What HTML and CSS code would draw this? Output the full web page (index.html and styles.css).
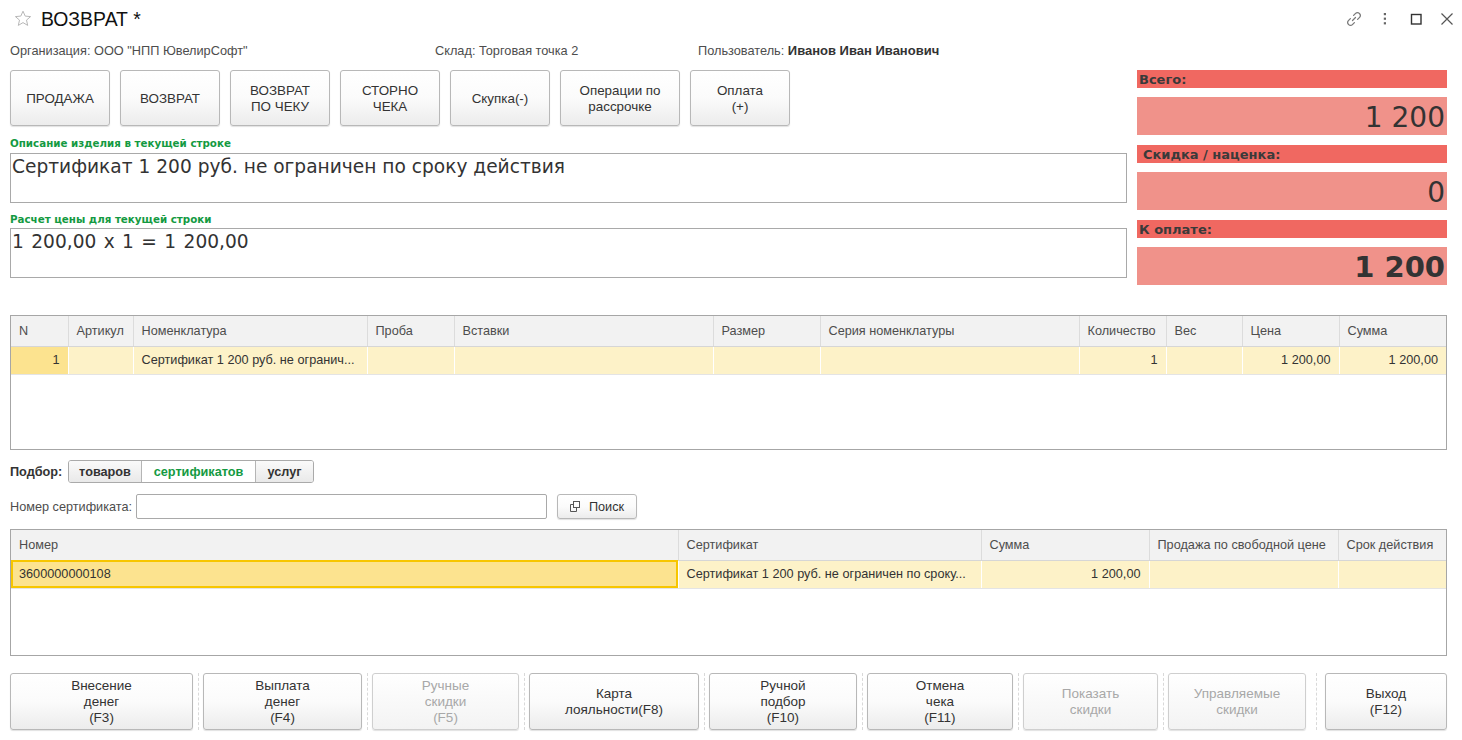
FILE: index.html
```html
<!DOCTYPE html>
<html lang="ru">
<head>
<meta charset="utf-8">
<title>ВОЗВРАТ</title>
<link rel="stylesheet" href="styles.css">
</head>
<body>
<div class="page">
  <header class="titlebar">
    <svg class="star" width="18" height="17" viewBox="0 0 18 17"><path d="M9 1.2 L11.2 6.1 L16.6 6.6 L12.5 10.1 L13.7 15.4 L9 12.6 L4.3 15.4 L5.5 10.1 L1.4 6.6 L6.8 6.1 Z" fill="none" stroke="#b8b8b8" stroke-width="1"/></svg>
    <h1 class="title">ВОЗВРАТ *</h1>
    <div class="win-icons">
      <svg width="18" height="18" viewBox="0 0 18 18"><g fill="none" stroke="#7a7a7a" stroke-width="1.3" stroke-linecap="round"><path d="M7.5 10.5 L10.5 7.5"/><path d="M8.6 5.4 L10.6 3.4 a2.6 2.6 0 0 1 3.7 0 l0.3 0.3 a2.6 2.6 0 0 1 0 3.7 L12.6 9.4"/><path d="M9.4 12.6 L7.4 14.6 a2.6 2.6 0 0 1 -3.7 0 l-0.3 -0.3 a2.6 2.6 0 0 1 0 -3.7 L5.4 8.6"/></g></svg>
      <svg width="18" height="18" viewBox="0 0 18 18"><g fill="#666"><rect x="7.8" y="3" width="2.2" height="2.2"/><rect x="7.8" y="7.6" width="2.2" height="2.2"/><rect x="7.8" y="12.2" width="2.2" height="2.2"/></g></svg>
      <svg width="18" height="18" viewBox="0 0 18 18"><rect x="4.5" y="4.5" width="9.5" height="9.5" fill="none" stroke="#333" stroke-width="1.4"/></svg>
      <svg width="18" height="18" viewBox="0 0 18 18"><path d="M3.5 3.5 L14.5 14.5 M14.5 3.5 L3.5 14.5" stroke="#555" stroke-width="1.2"/></svg>
    </div>
  </header>

  <div class="info">
    <span class="info-org">Организация: ООО "НПП ЮвелирСофт"</span>
    <span class="info-sklad">Склад: Торговая точка 2</span>
    <span class="info-user">Пользователь: <b>Иванов Иван Иванович</b></span>
  </div>

  <section class="top">
    <div class="top-left">
      <div class="ops">
        <button class="btn op w100">ПРОДАЖА</button>
        <button class="btn op w100">ВОЗВРАТ</button>
        <button class="btn op w100">ВОЗВРАТ<br>ПО ЧЕКУ</button>
        <button class="btn op w100">СТОРНО<br>ЧЕКА</button>
        <button class="btn op w100">Скупка(-)</button>
        <button class="btn op w120">Операции по<br>рассрочке</button>
        <button class="btn op w100">Оплата<br>(+)</button>
      </div>
      <div class="green-label">Описание изделия в текущей строке</div>
      <div class="bigbox">Сертификат 1 200 руб. не ограничен по сроку действия</div>
      <div class="green-label second">Расчет цены для текущей строки</div>
      <div class="bigbox calc">1 200,00 x 1 = 1 200,00</div>
    </div>
    <div class="totals">
      <div class="band">Всего:</div>
      <div class="val">1 200</div>
      <div class="band ind">Скидка / наценка:</div>
      <div class="val">0</div>
      <div class="band">К оплате:</div>
      <div class="val bold">1 200</div>
    </div>
  </section>

  <div class="grid grid1">
    <table>
      <colgroup>
        <col style="width:57px"><col style="width:65px"><col style="width:234px"><col style="width:87px"><col style="width:259px"><col style="width:107px"><col style="width:259px"><col style="width:87px"><col style="width:76px"><col style="width:97px"><col style="width:107px">
      </colgroup>
      <thead>
        <tr><th>N</th><th>Артикул</th><th>Номенклатура</th><th>Проба</th><th>Вставки</th><th>Размер</th><th>Серия номенклатуры</th><th>Количество</th><th>Вес</th><th>Цена</th><th>Сумма</th></tr>
      </thead>
      <tbody>
        <tr class="sel"><td class="r cur">1</td><td></td><td>Сертификат 1 200 руб. не огранич...</td><td></td><td></td><td></td><td></td><td class="r">1</td><td></td><td class="r">1 200,00</td><td class="r">1 200,00</td></tr>
      </tbody>
    </table>
  </div>

  <div class="podbor">
    <span class="podbor-label">Подбор:</span>
    <div class="seg">
      <span class="seg-item">товаров</span>
      <span class="seg-item active">сертификатов</span>
      <span class="seg-item">услуг</span>
    </div>
  </div>

  <div class="cert">
    <span class="cert-label">Номер сертификата:</span>
    <div class="cert-input"></div>
    <button class="btn search"><svg width="11" height="11" viewBox="0 0 11 11"><g fill="none" stroke="#555" stroke-width="1"><rect x="3.5" y="0.5" width="6" height="6"/><path d="M3.5 3.5 H0.5 V10.5 H6.5 V6.5"/></g></svg>Поиск</button>
  </div>

  <div class="grid grid2">
    <table>
      <colgroup>
        <col style="width:667px"><col style="width:303px"><col style="width:168px"><col style="width:189px"><col style="width:108px">
      </colgroup>
      <thead>
        <tr><th>Номер</th><th>Сертификат</th><th>Сумма</th><th>Продажа по свободной цене</th><th>Срок действия</th></tr>
      </thead>
      <tbody>
        <tr class="sel"><td class="cur box">3600000000108</td><td>Сертификат 1 200 руб. не ограничен по сроку...</td><td class="r">1 200,00</td><td></td><td></td></tr>
      </tbody>
    </table>
  </div>

  <footer class="actions">
    <button class="btn act b1">Внесение<br>денег<br>(F3)</button>
    <span class="sep"></span>
    <button class="btn act b2">Выплата<br>денег<br>(F4)</button>
    <span class="sep"></span>
    <button class="btn act b3 dis">Ручные<br>скидки<br>(F5)</button>
    <span class="sep"></span>
    <button class="btn act b4">Карта<br>лояльности(F8)</button>
    <span class="sep"></span>
    <button class="btn act b5">Ручной<br>подбор<br>(F10)</button>
    <span class="sep"></span>
    <button class="btn act b6">Отмена<br>чека<br>(F11)</button>
    <span class="sep"></span>
    <button class="btn act b7 dis">Показать<br>скидки</button>
    <span class="sep"></span>
    <button class="btn act b8 dis">Управляемые<br>скидки</button>
    <span class="sep wide"></span>
    <button class="btn act b9">Выход<br>(F12)</button>
  </footer>
</div>
</body>
</html>
```

FILE: styles.css
```css
* { box-sizing: border-box; }
html, body { margin: 0; padding: 0; background: #fff; }
body {
  font-family: "Liberation Sans", Arial, sans-serif;
  font-size: 12.7px;
  color: #333;
}
.page { width: 1462px; height: 740px; padding: 0 15px 0 10px; overflow: hidden; }

/* title bar */
.titlebar { height: 38px; display: flex; align-items: center; }
.star { margin-left: 4px; margin-top: -1px; }
.title { margin: -1px 0 0 9px; font-size: 19.4px; font-weight: normal; color: #111; line-height: 22px; }
.win-icons { margin-left: auto; margin-right: -9px; display: flex; gap: 13px; margin-top: 0; }

/* info */
.info { height: 24px; line-height: 26px; display: flex; color: #4d4d4d; font-size: 12.75px; }
.info-org { width: 425px; }
.info-sklad { width: 263px; }
.info-user b { color: #333; font-size: 13px; }

/* top section */
.top { margin-top: 8px; display: flex; gap: 10px; }
.top-left { width: 1117px; }
.ops { display: flex; gap: 10px; height: 56px; }
.btn {
  font-family: "Liberation Sans", Arial, sans-serif;
  border: 1px solid #b8b8b8;
  border-radius: 3px;
  background: linear-gradient(#ffffff 0%, #fbfbfb 50%, #ececec 100%);
  box-shadow: 0 1px 1px rgba(0,0,0,0.12);
  color: #333;
  padding: 0;
  cursor: default;
}
.op { height: 56px; font-size: 13.4px; line-height: 16px; padding-top: 2px; }
.w100 { width: 100px; }
.w120 { width: 120px; }

.green-label {
  font-family: "DejaVu Sans", Verdana, sans-serif;
  font-weight: bold;
  font-size: 10.3px;
  color: #149a42;
  height: 16px;
  line-height: 16px;
  margin-top: 9px;
  margin-bottom: 2px;
}
.green-label.second { margin-top: 8px; margin-bottom: 1px; }
.bigbox {
  height: 50px;
  border: 1px solid #a9a9a9;
  font-family: "DejaVu Sans", Verdana, sans-serif;
  font-size: 18.6px;
  color: #333;
  padding: 2px 0 0 1px;
  line-height: 22px;
}
.bigbox.calc { word-spacing: 1.5px; }

/* totals */
.totals { width: 310px; }
.band {
  height: 18px;
  line-height: 19px;
  background: #f06861;
  font-family: "DejaVu Sans", Verdana, sans-serif;
  font-weight: bold;
  font-size: 13px;
  color: #3a3a3a;
  padding-left: 2px;
}
.band.ind { padding-left: 6px; }
.val {
  height: 38px;
  margin: 9px 0 10px;
  background: #f0928a;
  font-family: "DejaVu Sans", Verdana, sans-serif;
  font-size: 28px;
  line-height: 41px;
  text-align: right;
  padding-right: 2px;
  color: #333;
}
.val.bold { font-weight: bold; font-size: 29px; margin-bottom: 0; }

/* grids */
.grid { border: 1px solid #a6a6a6; overflow: hidden; }
.grid1 { margin-top: 30px; height: 135px; }
.grid2 { margin-top: 10px; height: 127px; }
.grid table { border-collapse: collapse; table-layout: fixed; width: 1435px; }
.grid th {
  background: #f2f2f2;
  height: 30px;
  font-weight: normal;
  text-align: left;
  color: #4d4d4d;
  font-size: 12.7px;
  padding: 0 8px;
  border-left: 1px solid #dcdcdc;
  border-bottom: 1px solid #d6d6d6;
  white-space: nowrap;
  overflow: hidden;
}
.grid th:first-child { border-left: none; }
.grid td {
  height: 28px;
  background: #fdf2c8;
  border-left: 1px solid #fff;
  border-bottom: 1px solid #e4e4e4;
  color: #333;
  padding: 0 8px;
  white-space: nowrap;
  overflow: hidden;
  font-size: 12.7px;
}
.grid td:first-child { border-left: none; }
.grid td.r { text-align: right; }
.grid td.cur { background: #fce38f; }
.grid td.box { outline: 2px solid #f7c600; outline-offset: -2px; }

/* podbor */
.podbor { margin-top: 10px; height: 23px; display: flex; align-items: center; }
.podbor-label { font-weight: bold; color: #333; font-size: 12.7px; width: 58px; }
.seg { display: flex; height: 23px; border: 1px solid #aaa; border-radius: 3px; overflow: hidden; }
.seg-item {
  display: flex; align-items: center; justify-content: center;
  font-weight: bold; font-size: 12.7px; color: #333;
  background: linear-gradient(#fafafa, #e9e9e9);
  border-left: 1px solid #b5b5b5;
}
.seg-item:first-child { border-left: none; width: 72px; }
.seg-item:nth-child(2) { width: 114px; }
.seg-item:nth-child(3) { width: 58px; }
.seg-item.active { background: #fff; color: #149a42; }

/* cert row */
.cert { margin-top: 11px; height: 25px; display: flex; align-items: center; }
.cert-label { color: #4d4d4d; width: 126px; }
.cert-input { width: 411px; height: 25px; border: 1px solid #a9a9a9; border-radius: 2px; }
.search {
  margin-left: 10px; width: 80px; height: 25px;
  display: flex; align-items: center; justify-content: center; gap: 8px;
  font-size: 12.7px;
}

/* actions */
.actions { margin-top: 17px; display: flex; align-items: stretch; height: 57px; }
.act { height: 57px; font-size: 13.5px; line-height: 16px; padding-top: 0; }
.act.dis { color: #a8a8a8; background: linear-gradient(#fff, #f3f3f3); border-color: #cfcfcf; }
.sep { width: 10px; position: relative; }
.sep::after { content: ""; position: absolute; left: 5px; top: 0; bottom: 0; border-left: 1px dashed #d9d9d9; }
.sep.wide { width: 19px; }
.sep.wide::after { left: 10px; }
.b1 { width: 183px; }
.b2 { width: 159px; }
.b3 { width: 147px; }
.b4 { width: 170px; }
.b5 { width: 148px; }
.b6 { width: 146px; }
.b7 { width: 135px; }
.b8 { width: 138px; }
.b9 { width: 122px; }
```
